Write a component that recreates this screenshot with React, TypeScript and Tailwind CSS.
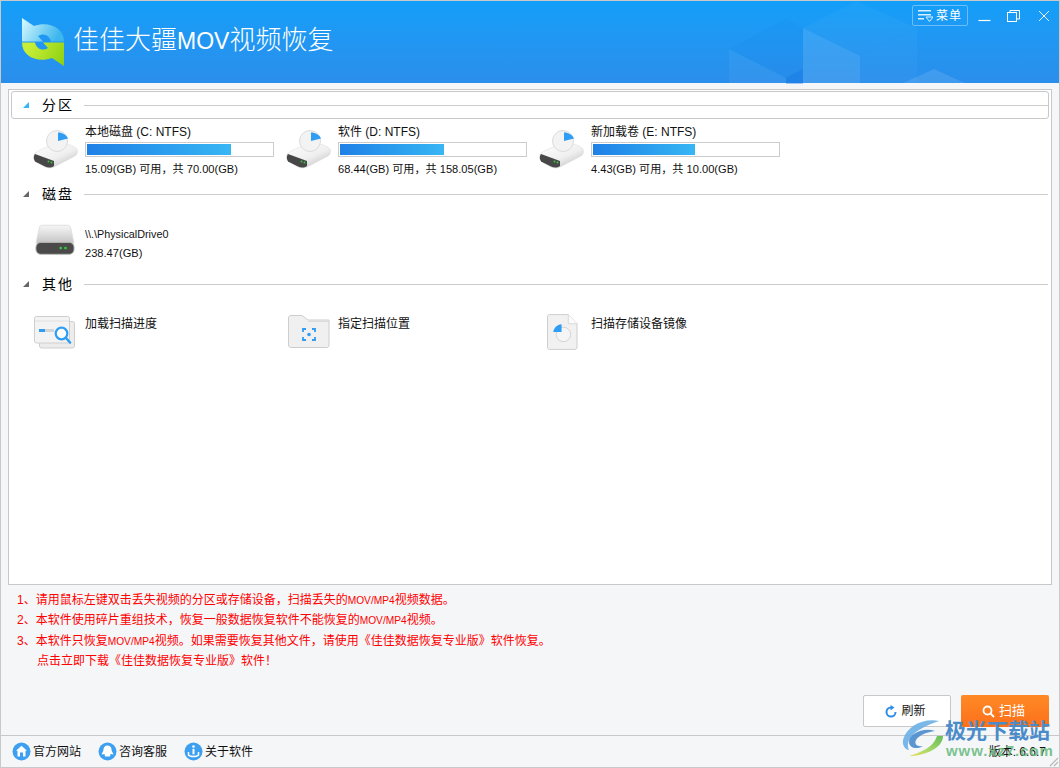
import React from "react";

const FONT = "[font-family:'Liberation_Sans','Noto_Sans_CJK_SC',sans-serif]";

function Logo() {
  return (
    <svg width="44" height="48" viewBox="0 0 44 48">
      <defs>
        <linearGradient id="lgA" x1="0" y1="0" x2="1" y2="0.3">
          <stop offset="0" stopColor="#d8fbff" />
          <stop offset="1" stopColor="#3db6ee" />
        </linearGradient>
        <linearGradient id="lgB" x1="0" y1="0" x2="1" y2="0.3">
          <stop offset="0" stopColor="#8ccf10" />
          <stop offset="1" stopColor="#c8ef38" />
        </linearGradient>
      </defs>
      <path d="M1 0 L13 8 C27 3 43 9 43 23.500 L30 23.500 C29 18 23 14 17 18 L22 23.500 L1 23.500 Z" fill="url(#lgA)" />
      <path d="M1 0 L13 8 C27 3 43 9 43 23.500 L30 23.500 C29 18 23 14 17 18 L22 23.500 L1 23.500 Z" fill="url(#lgB)" transform="rotate(180 22 24)" />
    </svg>
  );
}

function HeaderArt() {
  return (
    <svg className="absolute left-0 top-0 pointer-events-none" width="1060" height="83" viewBox="0 0 1060 83">
      <polygon points="802,27 855,0 916,27 859,55" fill="#ffffff" fillOpacity="0.03" />
      <polygon points="802,27 859,55 859,83 802,83" fill="#ffffff" fillOpacity="0.11" />
      <polygon points="859,55 916,27 916,83 859,83" fill="#ffffff" fillOpacity="0.03" />
      <polygon points="728,48 785,18 802,27 802,68 785,77" fill="#0f6fe0" fillOpacity="0.07" />
      <polygon points="728,48 785,77 785,83 728,83" fill="#ffffff" fillOpacity="0.05" />
      <polygon points="785,77 802,68 802,83 785,83" fill="#0f6fe0" fillOpacity="0.35" />
      <polygon points="900,83 933,68 966,83" fill="#ffffff" fillOpacity="0.11" />
    </svg>
  );
}

function DriveVolume() {
  return (
    <svg width="46" height="42" viewBox="0 0 46 42">
      <defs>
        <linearGradient id="dv" x1="0" y1="0" x2="0.8" y2="1">
          <stop offset="0" stopColor="#ffffff" />
          <stop offset="0.6" stopColor="#efefef" />
          <stop offset="1" stopColor="#c2c2c2" />
        </linearGradient>
      </defs>
      <path d="M2 25 C8 21 18 17 26 16 C34 15 40 17 44 21 C45 24 44 27 42 28 L21 39 C18 40.500 15 40 12 39 L3 34 C0 32 0 27 2 25 Z" fill="url(#dv)" stroke="#d8d8d8" strokeWidth="0.500" />
      <path d="M2 26 L21 33 L21 38 C18 40 15 40 12 38.500 L3 34 C0 32 0.500 28 2 26 Z" fill="#474747" />
      <circle cx="15.500" cy="33.500" r="1" fill="#35c43a" />
      <circle cx="18.500" cy="34.500" r="1" fill="#35c43a" />
      <circle cx="24" cy="13" r="10.500" fill="#f3f3f3" stroke="#dcdcdc" />
      <path d="M25 13 L25 4.500 C29.500 4.500 33.500 7 35 10.500 Z" fill="#2f9df4" />
    </svg>
  );
}

function DiskIcon() {
  return (
    <svg width="40" height="32" viewBox="0 0 42 33">
      <defs>
        <linearGradient id="dk" x1="0" y1="0" x2="0" y2="1">
          <stop offset="0" stopColor="#f7f7f7" />
          <stop offset="1" stopColor="#c4c4c4" />
        </linearGradient>
      </defs>
      <path d="M7 1 L34 1 C36 1 37 2 37.500 4 L41 20 L1 20 L4.500 4 C5 2 6 1 7 1 Z" fill="url(#dk)" stroke="#dedede" />
      <rect x="1" y="19" width="40" height="12.500" rx="5" fill="#4a4a4a" stroke="#b8b8b8" />
      <circle cx="27" cy="25" r="1.500" fill="#35c43a" />
      <circle cx="32" cy="25" r="1.500" fill="#35c43a" />
    </svg>
  );
}

function LoadIcon() {
  return (
    <svg width="42" height="33" viewBox="0 0 42 33">
      <rect x="5.500" y="5.500" width="35" height="26.500" rx="2" fill="#ececec" stroke="#cfcfcf" />
      <rect x="0.500" y="0.500" width="35" height="26.500" rx="2" fill="#f3f3f3" stroke="#cfcfcf" />
      <line x1="1" y1="5" x2="35" y2="5" stroke="#e0e0e0" />
      <rect x="5" y="13" width="6" height="3" fill="#2f9df4" />
      <rect x="11" y="13" width="9" height="3" fill="#d4d4d4" />
      <circle cx="27.500" cy="17.500" r="5.800" fill="#fff" stroke="#2f9df4" strokeWidth="2.200" />
      <line x1="32" y1="22" x2="36" y2="26.500" stroke="#2f9df4" strokeWidth="2.600" strokeLinecap="round" />
    </svg>
  );
}

function FolderIcon() {
  return (
    <svg width="42" height="33" viewBox="0 0 42 33">
      <path d="M0.500 3 C0.500 1.500 1.500 0.500 3 0.500 L14 0.500 L20 5 L41 5 L41 30 C41 31.500 40 32.500 39 32.500 L3 32.500 C1.500 32.500 0.500 31.500 0.500 30 Z" fill="#f0f0f0" stroke="#cdcdcd" />
      <line x1="20" y1="6.500" x2="41" y2="6.500" stroke="#dcdcdc" />
      <path d="M15 17 L15 14 L18 14 M24 14 L27 14 L27 17 M27 22 L27 25 L24 25 M18 25 L15 25 L15 22" fill="none" stroke="#2f9df4" strokeWidth="1.800" />
      <circle cx="21" cy="19.500" r="1.800" fill="#2f9df4" />
    </svg>
  );
}

function ImageIcon() {
  return (
    <svg width="31" height="36" viewBox="0 0 32 37">
      <path d="M2.500 0.500 L22 0.500 L31 10 L31 34 C31 35.500 30 36.500 29 36.500 L2.500 36.500 C1.500 36.500 0.500 35.500 0.500 34 L0.500 3 C0.500 1.500 1.500 0.500 2.500 0.500 Z" fill="#f1f1f1" stroke="#cdcdcd" />
      <path d="M22 0.500 L22 10 L31 10" fill="#fafafa" stroke="#d8d8d8" />
      <circle cx="17" cy="21" r="7.500" fill="#f5f5f5" stroke="#d2d2d2" />
      <path d="M15 18.500 L15 10.500 C10 11 7 14.500 6.500 18.500 Z" fill="#2f9df4" />
    </svg>
  );
}

function RoundIcon({ kind }: { kind: "home" | "bell" | "info" }) {
  return (
    <svg width="19" height="19" viewBox="0 0 19 19">
      <circle cx="9.500" cy="9.500" r="9" fill="#3d9ff0" />
      {kind === "home" && (
        <path d="M9.500 3.800 L15 8.800 L13.500 8.800 L13.500 14.500 L11 14.500 L11 10.500 L8 10.500 L8 14.500 L5.500 14.500 L5.500 8.800 L4 8.800 Z" fill="#fff" />
      )}
      {kind === "bell" && (
        <path d="M9.500 3.500 C12 3.500 13.500 5.500 13.500 7.500 C13.500 9.500 15 10.500 15.500 12.500 L12.500 12 L12 14.500 L7 14.500 L6.500 12 L3.500 12.500 C4 10.500 5.500 9.500 5.500 7.500 C5.500 5.500 7 3.500 9.500 3.500 Z" fill="#fff" />
      )}
      {kind === "info" && (
        <g>
          <circle cx="9.500" cy="4.500" r="1.300" fill="#fff" />
          <rect x="8.500" y="6.800" width="2" height="5.500" fill="#fff" />
          <path d="M4.500 10 L4.500 13 C6 15 13 15 14.500 13 L14.500 10" fill="none" stroke="#fff" strokeWidth="1.500" />
        </g>
      )}
    </svg>
  );
}

function Watermark() {
  return (
    <div className="absolute left-[900px] top-[716px] w-[160px] h-[52px] pointer-events-none">
      <svg className="absolute left-0 top-[2px]" width="46" height="44" viewBox="0 0 46 44">
        <defs>
          <linearGradient id="wm" x1="1" y1="0" x2="0" y2="1">
            <stop offset="0" stopColor="#55b84a" />
            <stop offset="0.6" stopColor="#a4d65a" />
            <stop offset="1" stopColor="#efd94e" />
          </linearGradient>
        </defs>
        <path d="M38 3 C22 0 6 8 2 22 C1 28 5 32 8 32 C5 26 8 18 18 12 C24 8 32 5 38 3 Z" fill="#6bb0e6" fillOpacity="0.9" />
        <path d="M34 13 C22 9 8 16 8 24 C8 30 16 32 22 28 C16 29 13 26 15 22 C18 17 26 14 34 13 Z" fill="#4a8ccc" fillOpacity="0.9" />
        <path d="M42 18 C42 30 24 38 8 38 C20 34 32 30 36 18 Z" fill="url(#wm)" fillOpacity="0.9" />
      </svg>
      <div className={`absolute left-[44px] top-[1px] whitespace-nowrap text-[21px] leading-[27px] font-bold text-[#4a8cca] ${FONT}`}>极光下载站</div>
      <div className={`absolute left-[45px] top-[26px] whitespace-nowrap text-[15px] leading-[18px] tracking-[0.9px] font-bold text-[#6abb82]/90 ${FONT}`}>www.xz7.com</div>
    </div>
  );
}

function Section({ title, focused }: { title: string; focused?: boolean }) {
  return (
    <div className={`flex items-center h-[28px] mx-[2px] rounded-[3px] border ${focused ? "border-[#c8c8c8]" : "border-transparent"}`}>
      <svg className="ml-[10px]" width="8" height="8" viewBox="0 0 8 8">
        <polygon points="7,1 7,7 1,7" fill={focused ? "#35b5f5" : "#666666"} />
      </svg>
      <span className="ml-[12px] text-[14px] tracking-[2px] text-black leading-none">{title}</span>
      <div className="ml-[10px] mr-0 flex-1 h-px bg-[#cccccc]" />
    </div>
  );
}

function Volume({ name, free, total, pct }: { name: string; free: string; total: string; pct: number }) {
  return (
    <div className="flex w-[253px]">
      <div className="w-[52px] pt-[4px]"><DriveVolume /></div>
      <div className="w-[189px]">
        <div className="text-[12px] leading-[16px] text-[#111] h-[18px]">{name}</div>
        <div className="h-[15px] border border-[#cccccc] p-px bg-white">
          <div className="h-full bg-gradient-to-r from-[#1f80e6] to-[#38b6f4]" style={{ width: `${pct}%` }} />
        </div>
        <div className="text-[11.100px] leading-[14px] mt-[5px] text-[#111] whitespace-nowrap">{free}(GB) 可用，共 {total}(GB)</div>
      </div>
    </div>
  );
}

function Other({ icon, label, pad }: { icon: React.ReactNode; label: string; pad: string }) {
  return (
    <div className="flex w-[253px] h-[40px]">
      <div className={`w-[52px] ${pad}`}>{icon}</div>
      <div className="text-[12px] leading-[16px] text-[#111] mt-[1px]">{label}</div>
    </div>
  );
}

function Foot({ kind, label }: { kind: "home" | "bell" | "info"; label: string }) {
  return (
    <div className="flex items-center gap-[2px] w-[86px]">
      <RoundIcon kind={kind} />
      <span className="text-[12px] text-[#111] whitespace-nowrap">{label}</span>
    </div>
  );
}

function Latin({ children }: { children: React.ReactNode }) {
  return <span className="text-[10.200px] leading-none">{children}</span>;
}

export default function App() {
  return (
    <div className={`relative w-[1060px] h-[768px] flex flex-col bg-[#f5f6f8] overflow-hidden border-x border-b border-[#c9c9c9] ${FONT}`}>
      <header className="relative h-[83px] shrink-0 bg-gradient-to-b from-[#129ff9] to-[#2a8eeb] border-t border-[#c9c9c9] flex items-start">
        <HeaderArt />
        <div className="relative mt-[17px] ml-[20px]"><Logo /></div>
        <h1 className="relative ml-[8px] mt-[19px] text-[26px] leading-[40px] font-light text-white whitespace-nowrap">佳佳大疆<span className="text-[23px]">MOV</span>视频恢复</h1>
        <div className="relative ml-auto flex items-start">
          <div className="mt-[4px] w-[56px] h-[21px] rounded-[2px] border border-[#6cbdf9] flex items-center justify-center gap-[3px]">
            <svg width="15" height="13" viewBox="0 0 15 13">
              <rect x="0" y="1" width="13" height="1.500" fill="#d9f0ff" />
              <rect x="0" y="5" width="13" height="1.500" fill="#d9f0ff" />
              <rect x="0" y="9" width="6" height="1.500" fill="#d9f0ff" />
              <polygon points="8,8 15,8 11.500,12.500" fill="none" stroke="#d9f0ff" />
            </svg>
            <span className="text-[12px] tracking-[1px] text-white leading-none">菜单</span>
          </div>
          <div className="ml-[1px] flex">
            <button className="w-[30px] h-[30px] flex items-center justify-center">
              <svg width="13" height="13" viewBox="0 0 13 13"><line x1="0.500" y1="10.500" x2="12.500" y2="10.500" stroke="#fff" strokeWidth="1.200" /></svg>
            </button>
            <button className="w-[30px] h-[30px] pr-[2px] flex items-center justify-center">
              <svg width="13" height="12" viewBox="0 0 13 12">
                <rect x="0.500" y="2.500" width="9" height="9" fill="none" stroke="#fff" />
                <path d="M3 2.500 L3 0.500 L12.500 0.500 L12.500 9 L9.500 9" fill="none" stroke="#fff" />
              </svg>
            </button>
            <button className="w-[30px] h-[30px] flex items-center justify-center">
              <svg width="12" height="12" viewBox="0 0 12 12"><path d="M1 1 L11 11 M11 1 L1 11" stroke="#fff" strokeWidth="0.900" /></svg>
            </button>
          </div>
        </div>
      </header>

      <main className="mx-[7px] mt-[6px] h-[496px] shrink-0 bg-white border border-[#c8c8c8] pt-[1px]">
        <Section title="分区" focused />
        <div className="flex pl-[24px] pt-[5px] h-[60px]">
          <Volume name="本地磁盘 (C: NTFS)" free="15.09" total="70.00" pct={78} />
          <Volume name="软件 (D: NTFS)" free="68.44" total="158.05" pct={56} />
          <Volume name="新加载卷 (E: NTFS)" free="4.43" total="10.00" pct={55} />
        </div>
        <div className="h-px" />
        <Section title="磁盘" />
        <div className="flex pl-[26px] h-[62px] pt-[20px]">
          <div className="w-[50px] -mt-[4px]"><DiskIcon /></div>
          <div>
            <div className="text-[10.800px] leading-[14px] text-[#111] mt-[-1px]">\\.\PhysicalDrive0</div>
            <div className="text-[11.100px] leading-[14px] mt-[5px] text-[#111]">238.47(GB)</div>
          </div>
        </div>
        <Section title="其他" />
        <div className="flex pl-[24px] pt-[17px]">
          <Other icon={<LoadIcon />} label="加载扫描进度" pad="pt-[1px] pl-[1px]" />
          <Other icon={<FolderIcon />} label="指定扫描位置" pad="pl-[2px]" />
          <Other icon={<ImageIcon />} label="扫描存储设备镜像" pad="-mt-[1px] pl-[8px]" />
        </div>
      </main>

      <section className="pl-[16px] pt-[5px] text-[12px] leading-[20.300px] text-[#ff0000] whitespace-nowrap">
        <div>1、请用鼠标左键双击丢失视频的分区或存储设备，扫描丢失的<Latin>MOV/MP4</Latin>视频数据。</div>
        <div>2、本软件使用碎片重组技术，恢复一般数据恢复软件不能恢复的<Latin>MOV/MP4</Latin>视频。</div>
        <div>3、本软件只恢复<Latin>MOV/MP4</Latin>视频。如果需要恢复其他文件，请使用《佳佳数据恢复专业版》软件恢复。</div>
        <div className="pl-[20px]">点击立即下载《佳佳数据恢复专业版》软件！</div>
      </section>

      <div className="flex justify-end gap-[10px] pr-[10px] mt-[24px]">
        <button className="w-[88px] h-[32px] rounded-[2px] border border-[#c8c8c8] bg-white flex items-center justify-center gap-[4px] pr-[3px] text-[12px] text-[#111]">
          <svg width="12" height="13" viewBox="0 0 12 13">
            <path d="M6 2.500 A4.500 4.500 0 1 0 10.500 7" fill="none" stroke="#2f8fe8" strokeWidth="2" />
            <polygon points="5.500,0 9.500,2.500 5.500,5.500" fill="#2f8fe8" />
          </svg>
          刷新
        </button>
        <button className="w-[88px] h-[32px] rounded-[2px] bg-gradient-to-b from-[#ff8a25] to-[#fb6f1b] flex items-center justify-center gap-[4px] pr-[3px] text-[13px] text-white">
          <svg width="13" height="13" viewBox="0 0 13 13" fill="none" stroke="#fff" strokeWidth="1.800">
            <circle cx="5.500" cy="5.500" r="4" />
            <line x1="8.500" y1="8.500" x2="12" y2="12" />
          </svg>
          扫描
        </button>
      </div>

      <footer className="mt-auto h-[32px] shrink-0 border-t border-[#c8c8c8] flex items-center pl-[11px] pr-[13px]">
        <Foot kind="home" label="官方网站" />
        <Foot kind="bell" label="咨询客服" />
        <Foot kind="info" label="关于软件" />
        <span className="ml-auto text-[12px] text-[#111] whitespace-nowrap">版本: 6.6.7</span>
      </footer>
      <Watermark />
      <svg className="absolute right-0 bottom-0" width="12" height="12" viewBox="0 0 12 12">
        <path d="M11 3 L3 11 M11 7 L7 11" stroke="#b8b8b8" strokeWidth="1.200" />
      </svg>
    </div>
  );
}
